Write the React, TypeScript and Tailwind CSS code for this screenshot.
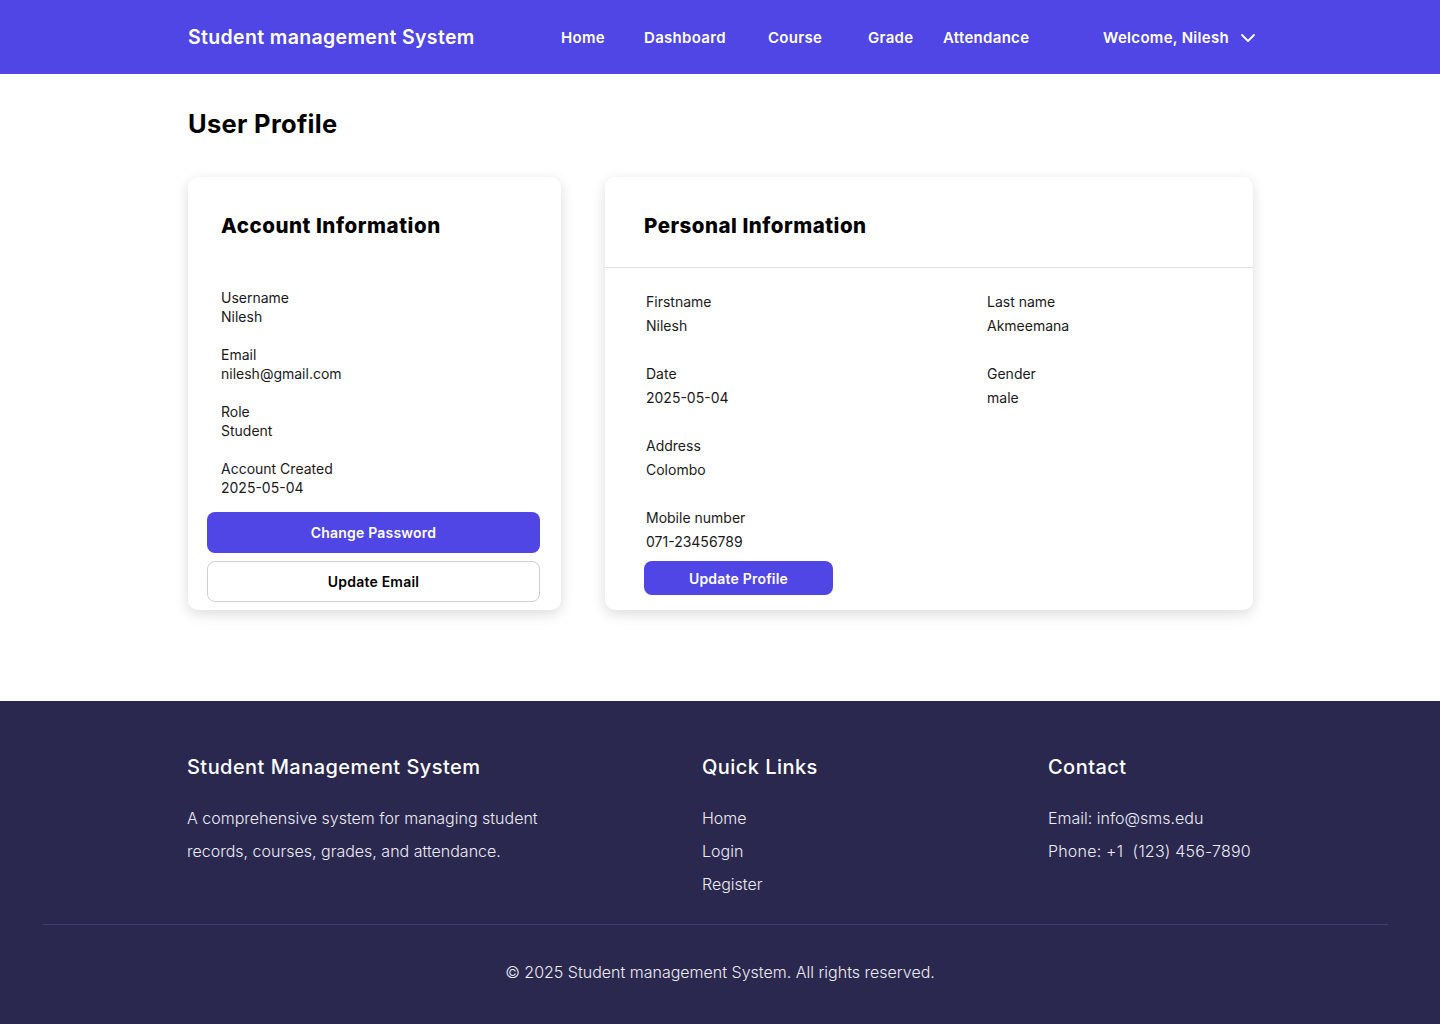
import { ChevronDown } from 'lucide-react'

const NAV: { label: string; w: string }[] = [
  { label: 'Home', w: 'w-[83px]' },
  { label: 'Dashboard', w: 'w-[124px]' },
  { label: 'Course', w: 'w-[100px]' },
  { label: 'Grade', w: 'w-[75px]' },
  { label: 'Attendance', w: 'w-auto' },
]

const ACCOUNT = [
  { label: 'Username', value: 'Nilesh' },
  { label: 'Email', value: 'nilesh@gmail.com' },
  { label: 'Role', value: 'Student' },
  { label: 'Account Created', value: '2025-05-04' },
]

const PERSONAL: [string, string][][] = [
  [['Firstname', 'Nilesh'], ['Last name', 'Akmeemana']],
  [['Date', '2025-05-04'], ['Gender', 'male']],
  [['Address', 'Colombo']],
  [['Mobile number', '071-23456789']],
]

export default function App() {
  return (
    <div className="min-h-screen bg-white font-['Inter',sans-serif] text-[#111]">
      {/* Top nav */}
      <header className="h-[74px] bg-[#4f46e5] text-white">
        <div className="ml-[188px] flex h-full w-[1072px] items-center pt-[2px]">
          <div className="w-[373px] text-[19.5px] font-semibold tracking-[0.35px]">Student management System</div>
          <nav className="flex items-center text-[15px] font-semibold tracking-[0.3px]">
            {NAV.map((n) => (
              <a key={n.label} className={n.w}>
                {n.label}
              </a>
            ))}
          </nav>
          <div className="ml-auto flex items-center gap-[7px] text-[15px] font-semibold tracking-[0.3px]">
            <span>Welcome, Nilesh</span>
            <ChevronDown size={24} strokeWidth={1.8} />
          </div>
        </div>
      </header>

      <main className="ml-[188px] w-[1065px] pb-[91px]">
        <h1 className="pt-[36px] text-[25.5px] font-bold leading-[28px] tracking-[0.3px] text-black">User Profile</h1>

        <div className="mt-[39px] grid grid-cols-[373px_1fr] gap-[44px]">
          {/* Account card */}
          <section className="rounded-[10px] bg-white pb-2 pl-[19px] pr-[21px] shadow-[0_4px_14px_rgba(0,0,0,0.14)]">
            <h2 className="px-[14px] pt-[36px] text-[20.5px] font-extrabold leading-[26px] tracking-[0.55px] text-black">
              Account Information
            </h2>
            <div className="mt-[49px] flex flex-col gap-[19px] px-[14px] text-[14px] leading-[19px] text-[#1a1a1a]">
              {ACCOUNT.map((a) => (
                <div key={a.label}>
                  <div>{a.label}</div>
                  <div>{a.value}</div>
                </div>
              ))}
            </div>
            <div className="mt-[15px] flex flex-col gap-2">
              <button className="h-[41px] rounded-[8px] bg-[#4f46e5] text-[14px] font-semibold tracking-[0.2px] text-white">
                Change Password
              </button>
              <button className="h-[41px] rounded-[8px] border border-[#cfcfcf] bg-white text-[14px] font-semibold tracking-[0.2px] text-black">
                Update Email
              </button>
            </div>
          </section>

          {/* Personal card */}
          <section className="rounded-[10px] bg-white pb-[15px] shadow-[0_4px_14px_rgba(0,0,0,0.14)]">
            <div className="border-b border-[#e2e2e2] px-[39px] pb-[28px] pt-[36px]">
              <h2 className="text-[20.5px] font-extrabold leading-[26px] tracking-[0.5px] text-black">Personal Information</h2>
            </div>
            <div className="px-[41px] pt-[24px] text-[14px] leading-[20px] text-[#1a1a1a]">
              <div className="flex flex-col gap-[28px]">
                {PERSONAL.map((row, i) => (
                  <div key={i} className="grid grid-cols-[341px_1fr]">
                    {row.map(([label, value]) => (
                      <div key={label} className="flex flex-col gap-1">
                        <div>{label}</div>
                        <div>{value}</div>
                      </div>
                    ))}
                  </div>
                ))}
              </div>
            </div>
            <div className="px-[39px] pt-[9px]">
              <button className="h-[34px] w-[189px] rounded-[8px] bg-[#4f46e5] text-[14px] font-semibold tracking-[0.2px] text-white">
                Update Profile
              </button>
            </div>
          </section>
        </div>
      </main>

      {/* Footer */}
      <footer className="bg-[#2a284e] text-[#ecebf5]">
        <div className="ml-[187px] grid w-[1067px] grid-cols-[515px_346px_1fr] pt-[53px] pb-[23px]">
          <div>
            <h3 className="text-[20px] font-medium leading-[26px] tracking-[0.45px] text-white">Student Management System</h3>
            <p className="mt-[22px] w-[370px] text-[16px] font-light leading-[33px]">
              A comprehensive system for managing student records, courses, grades, and attendance.
            </p>
          </div>
          <div>
            <h3 className="text-[20px] font-medium leading-[26px] tracking-[0.45px] text-white">Quick Links</h3>
            <ul className="mt-[22px] text-[16px] font-light leading-[33px]">
              <li>Home</li>
              <li>Login</li>
              <li>Register</li>
            </ul>
          </div>
          <div>
            <h3 className="text-[20px] font-medium leading-[26px] tracking-[0.45px] text-white">Contact</h3>
            <ul className="mt-[22px] text-[16px] font-light leading-[33px]">
              <li>Email: info@sms.edu</li>
              <li className="tracking-[0.2px]">Phone: +1&nbsp; (123) 456-7890</li>
            </ul>
          </div>
        </div>
        <div className="ml-[43px] mr-[52px] border-t border-[#3f3b7a]" />
        <div className="pb-[42px] pt-[36px] text-center text-[16px] font-light leading-[22px]">
          © 2025 Student management System. All rights reserved.
        </div>
      </footer>
    </div>
  )
}
